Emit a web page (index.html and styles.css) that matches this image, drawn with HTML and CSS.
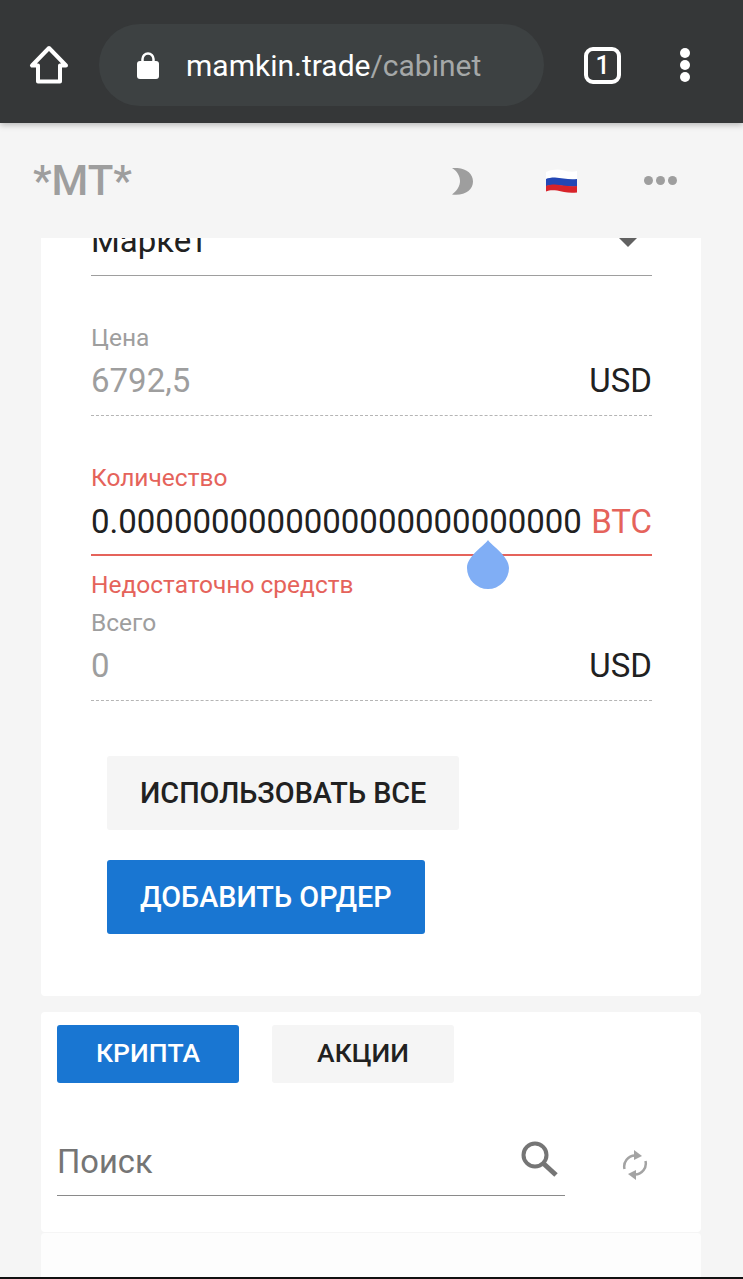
FILE: index.html
```html
<!DOCTYPE html>
<html lang="ru">
<head>
<meta charset="utf-8">
<title>*MT*</title>
<link rel="stylesheet" href="styles.css">
</head>
<body>
<div class="screen">
  <div class="toolbar">
    <svg class="home" width="40" height="40" viewBox="0 0 40 40"><path d="M20 3 3 20.500h6V36.500h22V20.500h6Z" fill="none" stroke="#fff" stroke-width="4" stroke-linejoin="round"/></svg>
    <div class="urlbar">
      <svg class="lock" width="24" height="28" viewBox="0 0 24 28"><path d="M6.500 13V8a5.500 5.500 0 0 1 11 0v5" fill="none" stroke="#fff" stroke-width="2.500"/><rect x="1" y="10" width="22" height="18" rx="3" fill="#fff"/></svg>
      <span class="url">mamkin.trade<span class="url-path">/cabinet</span></span>
    </div>
    <div class="tabs-count">1</div>
    <div class="menu-dots"><i></i><i></i><i></i></div>
  </div>
  <div class="appbar">
    <div class="logo">*MT*</div>
    <svg class="moon" width="24" height="28" viewBox="450 167 24 28"><path d="M452 167C465 166 473 172 473 180.500 473 189 465 195 452 193.500 457 190 460 185 460 180 460 175 457 170 452 167Z" fill="#9e9e9e"/></svg>
    <svg class="flag" width="33" height="26" viewBox="0 0 33 26"><path d="M1 3C8 0 14 0 19 1.500c5 1.500 9 1.500 13 .5V10C24 11 17 9.500 10 9 6 9 3 9.500 1 10.500Z" fill="#fff"/><path d="M1 10C3 9 6 8.500 10 8.500c7 .5 14 2.500 22 1.500v7.500C24 18.500 17 16.500 10 16c-4 0-7 .5-9 1.500Z" fill="#2347b5"/><path d="M1 17c2-1 5-1.500 9-1.500 7 .5 14 2.500 22 1.500v6.500c-8 1-14-.5-20-2-4-.5-8-.5-11 1Z" fill="#d8232a"/></svg>
    <div class="more"><i></i><i></i><i></i></div>
  </div>
  <div class="content">
    <section class="card card-order">
      <div class="select">
        <span class="select-value">Маркет</span>
        <span class="select-arrow"></span>
      </div>
      <div class="field field-price">
        <div class="field-label">Цена</div>
        <div class="field-row dashed">
          <span class="muted">6792,5</span>
          <span>USD</span>
        </div>
      </div>
      <div class="field field-qty">
        <div class="field-label error">Количество</div>
        <div class="field-row underline-error">
          <span>0.0000000000000000000000000</span>
          <span class="error">BTC</span>
        </div>
        <svg class="thumb" width="42" height="50" viewBox="0 0 42 50"><path d="M21 0 C25 6 42 16 42 28 A21 21 0 0 1 0 28 C0 16 17 6 21 0Z" fill="#80aef5"/></svg>
        <div class="field-help error">Недостаточно средств</div>
      </div>
      <div class="field field-total">
        <div class="field-label">Всего</div>
        <div class="field-row dashed">
          <span class="muted">0</span>
          <span>USD</span>
        </div>
      </div>
      <div class="actions">
        <button class="btn btn-grey btn-large">ИСПОЛЬЗОВАТЬ ВСЕ</button>
        <button class="btn btn-blue btn-large">ДОБАВИТЬ ОРДЕР</button>
      </div>
    </section>
    <section class="card card-market">
      <div class="segment">
        <button class="btn btn-blue btn-tab">КРИПТА</button>
        <button class="btn btn-grey btn-tab">АКЦИИ</button>
      </div>
      <div class="search-row">
        <div class="search">
          <span class="search-text">Поиск</span>
          <svg class="search-icon" width="38" height="36" viewBox="0 0 38 36"><circle cx="14" cy="14" r="11.500" fill="none" stroke="#757575" stroke-width="4"/><path d="M23 23 35 34" fill="none" stroke="#757575" stroke-width="5"/></svg>
        </div>
        <svg class="refresh" width="26" height="30" viewBox="0 0 26 30"><g fill="none" stroke="#a3a3a3" stroke-width="2.500"><path d="M2.500 19A11 11 0 0 1 13 5.500"/><path d="M23.500 11A11 11 0 0 1 13 24.500"/></g><g fill="#a3a3a3"><path d="M12 0 20 6 12 10Z"/><path d="M14 30 6 24 14 20Z"/></g></svg>
      </div>
    </section>
    <section class="card card-list"></section>
  </div>
  <div class="edge"></div>
</div>
</body>
</html>
```
FILE: styles.css
```css
* { box-sizing: border-box; }
html, body { margin: 0; padding: 0; }
body { font-family: Roboto, "Noto Sans", sans-serif; background: #f5f5f5; color: #212121; }
.screen { width: 743px; height: 1279px; display: flex; flex-direction: column; overflow: hidden; }

.toolbar { flex: 0 0 123px; background: #353738; display: flex; align-items: center; padding-top: 7px; box-shadow: 0 2px 6px rgba(0,0,0,.25); position: relative; z-index: 2; }
.home { margin: 0 0 0 29px; }
.urlbar { margin-left: 30px; width: 445px; height: 82px; border-radius: 41px; background: #3d4142; display: flex; align-items: center; padding-left: 37px; }
.url { margin-left: 26px; font-size: 30px; color: #fff; }
.url-path { color: #a5a8a8; }
.tabs-count { margin-left: 40px; width: 37px; height: 37px; border: 4px solid #fff; border-radius: 9px; color: #fff; font-size: 25px; font-weight: 500; display: flex; align-items: center; justify-content: center; }
.menu-dots { margin-left: 59px; display: flex; flex-direction: column; gap: 2px; }
.menu-dots i { display: block; width: 10px; height: 10px; border-radius: 50%; background: #fff; }

.appbar { flex: 0 0 115px; display: flex; align-items: center; padding-left: 33px; background: #f5f5f5; }
.logo { font-size: 42px; font-weight: 500; color: #9e9e9e; width: 416px; margin-bottom: 1px; }
.moon { margin-left: 1px; margin-top: 3px; }
.flag { margin-left: 71px; margin-top: 3px; }
.more { margin-left: 66px; display: flex; gap: 3px; }
.more i { display: block; width: 9px; height: 9px; border-radius: 50%; background: #9e9e9e; }

.content { flex: 1; overflow: hidden; padding: 0 42px 0 41px; background: #f5f5f5; }
.card { background: #fff; border-radius: 4px; }
.card-order { height: 758px; padding: 0 49px 0 50px; border-radius: 0 0 4px 4px; }
.select { height: 38px; border-bottom: 1px solid #9e9e9e; display: flex; justify-content: space-between; overflow: hidden; position: relative; }
.select-value { font-size: 33px; line-height: 36px; margin-top: -15px; display: block; }
.select-arrow { width: 0; height: 0; border-left: 9px solid transparent; border-right: 9px solid transparent; border-top: 9px solid #616161; margin-right: 15px; }

.field { position: relative; }
.field-label { font-size: 24.500px; line-height: 28px; color: #9e9e9e; }
.field-row { display: flex; justify-content: space-between; font-size: 33px; line-height: 40px; }
.muted { color: #9e9e9e; }
.error { color: #e5635b; }
.dashed { height: 64px; border-bottom: 1px dashed #b5b5b5; padding-top: 9px; }
.field-price { padding-top: 48px; }
.field-qty { padding-top: 48px; }
.field-label.error { color: #e5635b; }
.underline-error { height: 65px; border-bottom: 2px solid #e5635b; padding-top: 11px; margin-top: -1px; }
.field-help { font-size: 24.500px; line-height: 28px; margin-top: 15px; }
.thumb { position: absolute; left: 376px; top: 124px; }
.field-total { padding-top: 10px; }

.actions { padding: 55px 0 0 16px; display: flex; flex-direction: column; align-items: flex-start; gap: 30px; }
.btn { border: 0; border-radius: 3px; font-family: inherit; font-weight: 500; padding: 0; }
.btn-grey { background: #f5f5f5; color: #212121; }
.btn-blue { background: #1976d2; color: #fff; }
.btn-large { height: 74px; font-size: 28.800px; padding: 0 33px; }
.btn-tab { width: 182px; height: 58px; font-size: 26.500px; padding-bottom: 4px; }

.card-market { margin-top: 16px; height: 220px; padding: 13px 16px 0; }
.segment { display: flex; gap: 33px; }
.search-row { display: flex; margin-top: 35px; }
.search { width: 508px; height: 78px; border-bottom: 1px solid #8a8a8a; display: flex; align-items: center; justify-content: space-between; padding-right: 6px; }
.search-text { font-size: 32.700px; color: #757575; margin-top: 10px; }
.search-icon { margin-top: 4px; }
.refresh { margin-left: 57px; margin-top: 32px; }

.card-list { margin-top: 1px; height: 60px; background: #fdfdfd; }
.edge { flex: 0 0 2px; background: #111; position: relative; }
```
